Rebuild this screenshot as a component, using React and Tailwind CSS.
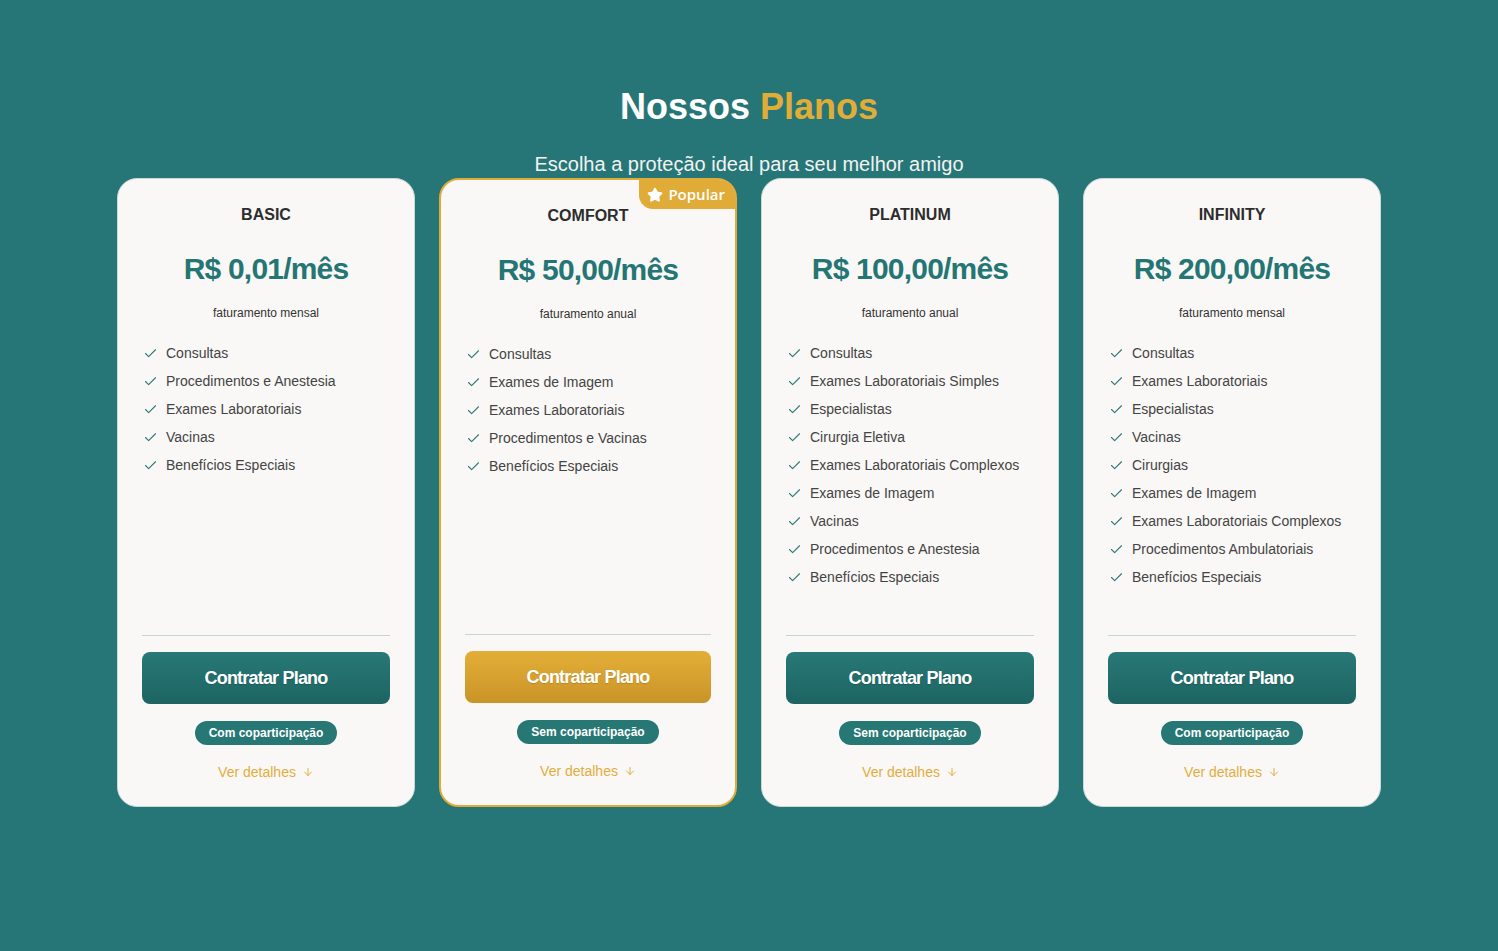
import { Check, ArrowDown, Star } from "lucide-react";

const plans = [
  {
    name: "BASIC",
    price: "R$ 0,01/mês",
    billing: "faturamento mensal",
    features: ["Consultas", "Procedimentos e Anestesia", "Exames Laboratoriais", "Vacinas", "Benefícios Especiais"],
    copay: "Com coparticipação",
  },
  {
    name: "COMFORT",
    price: "R$ 50,00/mês",
    billing: "faturamento anual",
    features: ["Consultas", "Exames de Imagem", "Exames Laboratoriais", "Procedimentos e Vacinas", "Benefícios Especiais"],
    copay: "Sem coparticipação",
    popular: true,
  },
  {
    name: "PLATINUM",
    price: "R$ 100,00/mês",
    billing: "faturamento anual",
    features: [
      "Consultas",
      "Exames Laboratoriais Simples",
      "Especialistas",
      "Cirurgia Eletiva",
      "Exames Laboratoriais Complexos",
      "Exames de Imagem",
      "Vacinas",
      "Procedimentos e Anestesia",
      "Benefícios Especiais",
    ],
    copay: "Sem coparticipação",
  },
  {
    name: "INFINITY",
    price: "R$ 200,00/mês",
    billing: "faturamento mensal",
    features: [
      "Consultas",
      "Exames Laboratoriais",
      "Especialistas",
      "Vacinas",
      "Cirurgias",
      "Exames de Imagem",
      "Exames Laboratoriais Complexos",
      "Procedimentos Ambulatoriais",
      "Benefícios Especiais",
    ],
    copay: "Com coparticipação",
  },
];

function PlanCard({ plan }) {
  const popular = plan.popular;
  return (
    <div
      className={
        popular
          ? "relative w-[298px] flex flex-col rounded-[20px] bg-[#f9f8f6] border-2 border-[#e0ab36] px-6 pt-6 pb-6"
          : "relative w-[298px] flex flex-col rounded-[20px] bg-[#f9f8f6] border border-[#cbd8d8] px-6 pt-6 pb-6"
      }
    >
      {popular && (
        <div
          className="absolute top-0 right-0 h-[29px] flex items-center gap-[5px] pl-2 pr-[10px] bg-[#e0ab36] text-white rounded-tr-[17px] rounded-bl-[14px] text-[15px] font-semibold"
          style={{ fontFamily: '"Open Sans", "Noto Sans", sans-serif' }}
        >
          <Star className="w-4 h-4 fill-white" strokeWidth={2} />
          Popular
        </div>
      )}

      <h3 className="text-center text-[16px] leading-6 font-bold text-[#2d2d2d]">{plan.name}</h3>
      <div className="mt-6 text-center text-[30px] leading-9 font-bold tracking-[-0.8px] text-[#247674]">{plan.price}</div>
      <p className="mt-[18px] text-center text-[12px] leading-4 text-[#333]">{plan.billing}</p>

      <ul className="mt-[22px] flex flex-col gap-2 flex-1">
        {plan.features.map((f) => (
          <li key={f} className="flex items-center gap-[8px] h-5 pl-[1px] text-[14px] text-[#444]">
            <Check className="w-[15px] h-[15px] text-[#2a7a78]" strokeWidth={1.75} />
            {f}
          </li>
        ))}
      </ul>

      <div className="mt-12 border-t border-[#c4d6d6] pt-4 flex flex-col items-center">
        <button
          className={
            popular
              ? "w-full h-[52px] rounded-lg bg-gradient-to-b from-[#e3ae37] to-[#c99427] text-white text-[18px] font-bold tracking-[-0.8px] [text-shadow:0_1px_1px_rgba(0,0,0,0.15)]"
              : "w-full h-[52px] rounded-lg bg-gradient-to-b from-[#287977] to-[#1d6462] text-white text-[18px] font-bold tracking-[-0.8px] [text-shadow:0_1px_1px_rgba(0,0,0,0.15)]"
          }
        >
          Contratar Plano
        </button>
        <span className="mt-[17px] h-6 px-[14px] flex items-center rounded-full bg-[#277775] text-white text-[12px] font-bold">
          {plan.copay}
        </span>
        <a className="mt-[17px] h-5 flex items-center gap-[6px] text-[14px] text-[#e3ad3c]">
          Ver detalhes
          <ArrowDown className="w-3 h-3" strokeWidth={2} />
        </a>
      </div>
    </div>
  );
}

export default function App() {
  return (
    <div
      className="min-h-screen bg-[#277677] pt-[87px] flex flex-col items-center"
      style={{ fontFamily: '"Liberation Sans", Arial, sans-serif' }}
    >
      <h1 className="text-[36px] leading-10 font-bold text-white">
        Nossos <span className="text-[#e2ad36]">Planos</span>
      </h1>
      <p className="mt-[23px] text-[20px] leading-7 text-[#f2f2f2]">Escolha a proteção ideal para seu melhor amigo</p>
      <div className="flex items-stretch gap-6">
        {plans.map((p) => (
          <PlanCard key={p.name} plan={p} />
        ))}
      </div>
    </div>
  );
}
